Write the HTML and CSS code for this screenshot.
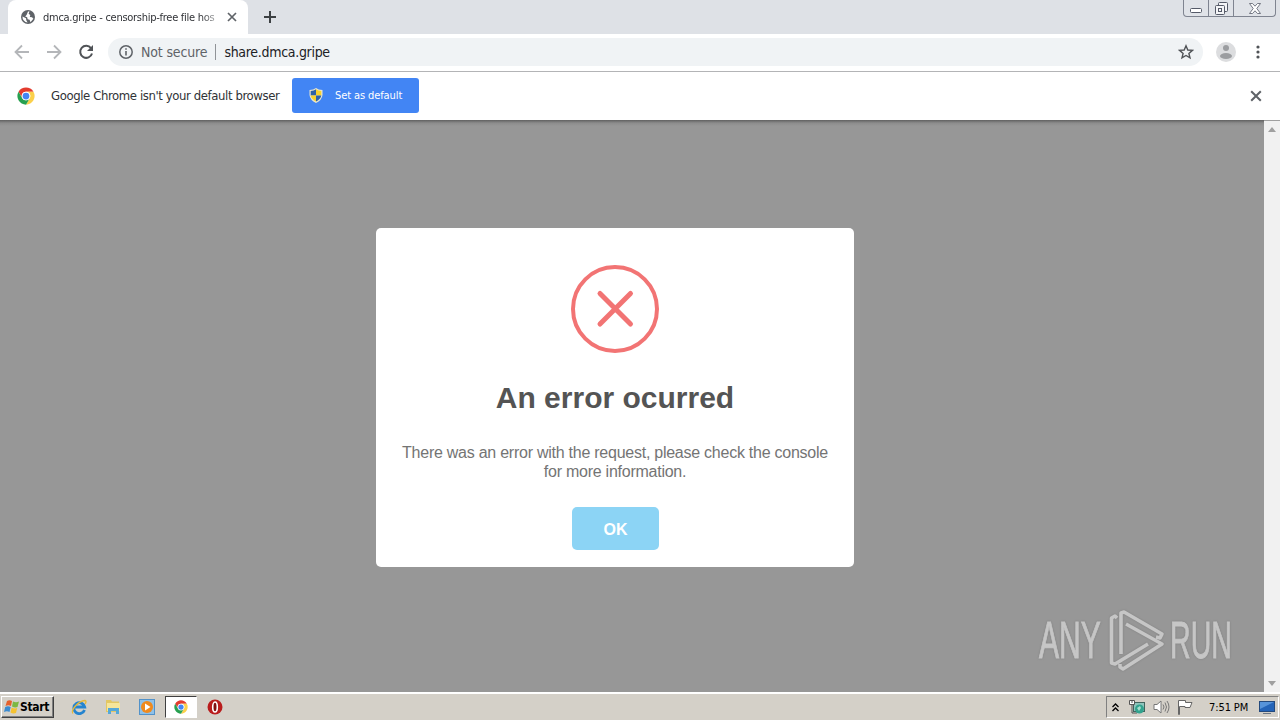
FILE: index.html
```html
<!DOCTYPE html>
<html lang="en">
<head>
	<meta charset="UTF-8">
	<title>dmca.gripe - censorship-free file hosting</title>
	<link rel="stylesheet" href="styles.css">
</head>
<body>
	<!-- shared icons -->
	<svg class="defs" width="0" height="0">
		<symbol id="chrome" viewBox="0 0 48 48">
			<circle cx="24" cy="24" r="23" fill="#fff"/>
			<path d="M4.1 12.5A23 23 0 0 1 43.9 12.5H24A11.5 11.5 0 0 0 14 29.7Z" fill="#e33b2e"/>
			<path d="M43.9 12.5A23 23 0 0 1 24 47L34 29.7A11.5 11.5 0 0 0 24 12.5Z" fill="#fbd04b"/>
			<path d="M24 47A23 23 0 0 1 4.1 12.5L14 29.7A11.5 11.5 0 0 0 34 29.7Z" fill="#27a050"/>
			<circle cx="24" cy="24" r="11.5" fill="#fff"/>
			<circle cx="24" cy="24" r="9" fill="#4285f4"/>
		</symbol>
		<symbol id="cross" viewBox="0 0 10 10">
			<path d="M1 1L9 9M9 1L1 9" fill="none" stroke="currentColor" stroke-width="1.7"/>
		</symbol>
	</svg>

	<div class="tabstrip">
		<div class="tab">
			<svg class="globe" width="14" height="14" viewBox="0 0 14 14">
				<circle cx="7" cy="7" r="7" fill="#5f6368"/>
				<path d="M7 1.600L8.500 1.500L7.600 3.800L9.300 5.100L8.800 7L11 7.300L12.400 8.800L9.500 12.200L8.600 9.800L6.600 9.200L6.200 7.200L4.200 6.400L5.700 4.700Z" fill="#fff"/>
				<path d="M1.500 6.500L5 8.300L5.300 10.200L6.600 12.600A5.700 5.700 0 0 1 1.500 6.500Z" fill="#fff"/>
			</svg>
			<span class="tab-title">dmca.gripe - censorship-free file hos</span>
			<svg class="tab-close" width="10" height="10"><use href="#cross"/></svg>
		</div>
		<svg class="new-tab" width="12" height="12" viewBox="0 0 12 12"><path d="M6 0V12M0 6H12" stroke="#3c4043" stroke-width="2"/></svg>
		<div class="caption">
			<span class="cap"><svg width="13" height="5" viewBox="0 0 13 5"><rect x=".5" y=".5" width="11" height="4" rx="1" fill="#fff" stroke="#555a68"/></svg></span>
			<span class="cap"><svg width="13" height="13" viewBox="0 0 13 13" fill="#f4f5f7" stroke="#555a68"><rect x="3.5" y=".5" width="9" height="9" rx="1"/><rect x=".5" y="3.5" width="9" height="9" rx="1"/><rect x="3.5" y="6.5" width="3" height="3"/></svg></span>
			<span class="cap wide"><svg width="12" height="11" viewBox="0 0 12 11"><path d="M.5.5H3.5L6 3.2L8.5.5H11.5L7.8 5.5L11.5 10.5H8.5L6 7.8L3.5 10.5H.5L4.2 5.5Z" fill="#fff" stroke="#555a68" stroke-width=".8"/></svg></span>
		</div>
	</div>

	<div class="toolbar">
		<svg class="nav" width="16" height="16" viewBox="0 0 16 16"><path d="M15 8H2M8 1.500L1.500 8L8 14.500" fill="none" stroke="#b4b6b9" stroke-width="1.800"/></svg>
		<svg class="nav" width="16" height="16" viewBox="0 0 16 16"><path d="M1 8H14M8 1.500L14.500 8L8 14.500" fill="none" stroke="#b4b6b9" stroke-width="1.800"/></svg>
		<svg class="nav" width="16" height="16" viewBox="0 0 16 16"><path d="M13 4.200A6 6 0 1 0 14 9.500" fill="none" stroke="#505357" stroke-width="2"/><path d="M15 1V7H9Z" fill="#505357"/></svg>
		<div class="omnibox">
			<svg width="14" height="14" viewBox="0 0 14 14"><circle cx="7" cy="7" r="6.200" fill="none" stroke="#5f6368" stroke-width="1.500"/><path d="M7 6V10.500M7 3.300V4.800" stroke="#5f6368" stroke-width="1.600"/></svg>
			<span class="insecure">Not secure</span>
			<span class="url">share.dmca.gripe</span>
			<svg class="star" width="16" height="16" viewBox="0 0 16 16"><path d="M8 1.800L9.800 6L14.400 6.400L10.900 9.400L12 13.900L8 11.500L4 13.900L5.100 9.400L1.600 6.400L6.200 6Z" fill="none" stroke="#505357" stroke-width="1.400"/></svg>
		</div>
		<svg class="avatar" width="20" height="20" viewBox="0 0 20 20"><circle cx="10" cy="10" r="10" fill="#dcdddf"/><circle cx="10" cy="6" r="3" fill="#9b9da0"/><ellipse cx="10" cy="14" rx="6" ry="3" fill="#9b9da0"/></svg>
		<svg class="menu" width="4" height="14" viewBox="0 0 4 14" fill="#505357"><circle cx="2" cy="2" r="1.600"/><circle cx="2" cy="7" r="1.600"/><circle cx="2" cy="12" r="1.600"/></svg>
	</div>

	<div class="infobar">
		<svg width="18" height="18"><use href="#chrome"/></svg>
		<span class="infobar-text">Google Chrome isn't your default browser</span>
		<a class="set-default" href="#">
			<svg width="14" height="15" viewBox="0 0 14 15">
				<path d="M7 0Q9.500 2 13.500 2V7Q13 12 7 15Q1 12 .5 7V2Q4.500 2 7 0Z" fill="#e8e6d0"/>
				<path d="M7 1.300V7.500H1.700V3Q5 3 7 1.300Z" fill="#2e62a8"/>
				<path d="M7 1.300Q9 3 12.300 3V7.500H7Z" fill="#f7d22e"/>
				<path d="M1.700 7.500H7V13.600Q2.200 11 1.700 7.500Z" fill="#f7d22e"/>
				<path d="M7 7.500H12.300Q11.800 11 7 13.600Z" fill="#2e62a8"/>
			</svg>
			<span>Set as default</span>
		</a>
		<svg class="infobar-close" width="12" height="12"><use href="#cross"/></svg>
	</div>

	<div class="viewport">
		<div class="page">
			<div class="modal">
				<svg class="error-icon" width="88" height="88" viewBox="0 0 88 88" fill="none" stroke="#f27474">
					<circle cx="44" cy="44" r="42" stroke-width="4"/>
					<path d="M29 28.500L59.500 59M59.500 28.500L29 59" stroke-width="5" stroke-linecap="round"/>
				</svg>
				<h1>An error ocurred</h1>
				<p>There was an error with the request, please check the console for more information.</p>
				<a class="ok" href="#">OK</a>
			</div>
			<div class="watermark">
				<span class="any">ANY</span>
				<svg width="56" height="62" viewBox="0 0 56 62" fill="none" stroke="#c6c6c6" stroke-width="3.600" stroke-linejoin="round">
					<path d="M8 8L6 6L2.500 8V53L6 54L39 34"/>
					<path d="M12 44V3L15 2L53 24L51 28L47 27"/>
					<path d="M17 14L53 34L14 59L11 57V54"/>
				</svg>
				<span class="run">RUN</span>
			</div>
		</div>
		<div class="scrollbar">
			<svg width="8" height="5" viewBox="0 0 8 5"><path d="M0 5L4 0L8 5Z" fill="#a0a0a0"/></svg>
			<svg width="8" height="5" viewBox="0 0 8 5"><path d="M0 0L4 5L8 0Z" fill="#a0a0a0"/></svg>
		</div>
	</div>

	<div class="taskbar">
		<a class="start" href="#">
			<svg width="16" height="16" viewBox="0 0 16 16">
				<path d="M3 2Q5.500 .5 8 2L7 7Q4.500 5.500 1.500 7Z" fill="#e5602c"/>
				<path d="M9 2.500Q12 4 15 2.500L13.500 8Q11 9 8 7.500Z" fill="#7cb843"/>
				<path d="M1.200 8Q4 6.500 6.700 8L5.500 13Q3 11.500 0 13Z" fill="#3b8bd0"/>
				<path d="M7.700 8.500Q10.500 10 13.200 9L12 14Q9 15 6.500 13.500Z" fill="#f5c230"/>
			</svg>
			<span>Start</span>
		</a>
		<div class="quick">
			<span class="task"><svg width="16" height="16" viewBox="0 0 16 16" fill="none"><path d="M13.500 11A5.500 5.500 0 1 1 13.700 8H4" stroke="#2584cf" stroke-width="2.800"/><path d="M2 14.500C-1 12 7 2 14 1.500Q16 2 14 5" stroke="#e6b93a" stroke-width="1.400"/></svg></span>
			<span class="task"><svg width="16" height="16" viewBox="0 0 16 16"><path d="M1 1H6L7 2.500H14V13H1Z" fill="#e3c763"/><path d="M2 4H15V12H2Z" fill="#f6e59a"/><path d="M3 15V9H14V15H11V12H6V15Z" fill="#56a8d8"/></svg></span>
			<span class="task"><svg width="16" height="16" viewBox="0 0 16 16"><rect x=".5" y=".5" width="15" height="15" fill="#8fc1e8" stroke="#5292c9"/><circle cx="8" cy="8" r="6" fill="#f08a1d"/><path d="M6 4.500L11.500 8L6 11.500Z" fill="#fff"/></svg></span>
			<span class="task active"><svg width="14" height="14"><use href="#chrome"/></svg></span>
			<span class="task"><svg width="16" height="16" viewBox="0 0 16 16"><circle cx="8" cy="8" r="7.500" fill="#b91c1c"/><ellipse cx="8" cy="8" rx="2.300" ry="5" fill="#811010" stroke="#fff" stroke-width="1.600"/></svg></span>
		</div>
		<div class="tray">
			<svg width="7" height="9" viewBox="0 0 7 9" fill="none" stroke="#000" stroke-width="1.300"><path d="M.5 4L3.500 1L6.500 4M.5 8L3.500 5L6.500 8"/></svg>
			<svg class="net" width="16" height="16" viewBox="0 0 16 16"><rect x="4.500" y="3.500" width="11" height="9" fill="#8ec5bd" stroke="#41645e"/><path d="M.5 1.500H5.500V5.500H.5Z" fill="#fff" stroke="#555"/><path d="M3 1V4M3 6V14H8" fill="none" stroke="#555"/><circle cx="10.500" cy="10" r="4.500" fill="#32a38e"/><path d="M8 9L11 7L12 9L10 12Z" fill="#a9dfcf"/></svg>
			<svg class="sound" width="17" height="16" viewBox="0 0 17 16" fill="none" stroke="#777"><path d="M1 5.500H4L8 2V14L4 10.500H1Z" fill="#fff"/><path d="M10 5.500Q12 8 10 10.500M12 3.500Q15 8 12 12.500M14 2Q18 8 14 14"/></svg>
			<svg class="flag" width="16" height="16" viewBox="0 0 16 16" fill="#fff" stroke="#666"><path d="M1.500 15.500V1.500H8.500V3.500H15L13 8.500H8V7.500H2.500V15.500Z"/></svg>
			<span class="clock">7:51 PM</span>
			<svg class="desk" width="16" height="14" viewBox="0 0 16 14"><rect x=".5" y="1.500" width="15" height="10" fill="#2464b8" stroke="#244a7d"/><path d="M1 2H15L1 9Z" fill="#5794da"/><path d="M4 13.500H12" stroke="#6d7784"/></svg>
		</div>
	</div>
</body>
</html>
```
FILE: styles.css
```css
* {
	box-sizing: border-box;
}
body {
	margin: 0;
	width: 1280px;
	height: 720px;
	overflow: hidden;
	display: flex;
	flex-direction: column;
	background: #fff;
	color: #303236;
	font-family: "DejaVu Sans Condensed", "DejaVu Sans", sans-serif;
	font-stretch: condensed;
}
a {
	text-decoration: none;
}
svg {
	display: block;
	flex: none;
}
.defs {
	position: absolute;
}
.tabstrip {
	display: flex;
	height: 34px;
	flex: none;
	padding-left: 8px;
	background: #dee1e6;
}
.tab {
	display: flex;
	align-items: center;
	width: 240px;
	padding-left: 13px;
	background: #fff;
	border-radius: 8px 8px 0 0;
}
.tab-title {
	width: 175px;
	margin-left: 8px;
	white-space: nowrap;
	font-size: 11px;
	letter-spacing: -.27px;
	-webkit-mask-image: linear-gradient(90deg, #000 90%, rgba(0, 0, 0, .3));
	mask-image: linear-gradient(90deg, #000 90%, rgba(0, 0, 0, .3));
}
.tab-close {
	margin-left: 9px;
	color: #5f6368;
}
.new-tab {
	margin: 11px 0 0 16px;
}
.caption {
	display: flex;
	height: 17px;
	margin: 0 4px 0 auto;
	border: 1px solid #7f8490;
	border-top: 0;
	border-radius: 0 0 4px 4px;
	background: #e0e3e8;
}
.cap {
	display: flex;
	align-items: center;
	justify-content: center;
	width: 25px;
	border-right: 1px solid #7f8490;
}
.cap:first-child {
	padding-top: 5px;
}
.cap.wide {
	width: 41px;
	border: 0;
}
.toolbar {
	display: flex;
	align-items: center;
	height: 38px;
	flex: none;
	padding: 0 20px 1px 14px;
	border-bottom: 1px solid #b3b4b6;
}
.nav {
	margin-right: 16px;
}
.omnibox {
	display: flex;
	align-items: center;
	width: 1095px;
	height: 28px;
	margin-left: -2px;
	padding: 0 9px 0 11px;
	border-radius: 14px;
	background: #f0f3f5;
	font-size: 14px;
}
.insecure {
	margin-left: 8px;
	padding-right: 8px;
	border-right: 1px solid #909397;
	color: #5f6368;
	letter-spacing: -.15px;
}
.url {
	margin-left: 8px;
	color: #202124;
	letter-spacing: -.3px;
}
.star {
	margin-left: auto;
}
.avatar {
	margin-left: 13px;
}
.menu {
	margin-left: auto;
}
.infobar {
	display: flex;
	align-items: center;
	height: 48px;
	flex: none;
	padding: 0 18px 1px 17px;
}
.infobar-text {
	margin-left: 16px;
	width: 241px;
	white-space: nowrap;
	font-size: 13px;
	letter-spacing: -.4px;
}
.set-default {
	display: flex;
	align-items: center;
	width: 127px;
	height: 35px;
	padding-left: 17px;
	border-radius: 3px;
	background: #4285f4;
	color: #fff;
	font-size: 11px;
	letter-spacing: -.1px;
}
.set-default span {
	margin-left: 12px;
}
.infobar-close {
	margin-left: auto;
	color: #5f6368;
}
.viewport {
	display: flex;
	height: 572px;
	flex: none;
}
.page {
	position: relative;
	width: 1264px;
	padding: 108px 0 0 376px;
	background: linear-gradient(#606060, #8c8c8c 3px, #979797 6px);
}
.modal {
	display: flex;
	flex-direction: column;
	align-items: center;
	width: 478px;
	height: 339px;
	padding: 37px 20px 0;
	border-radius: 5px;
	background: #fff;
	font-family: "Liberation Sans", Arial, sans-serif;
	text-align: center;
}
.modal h1 {
	margin: 28px 0 0;
	color: #545454;
	font-size: 30px;
	line-height: 34px;
}
.modal p {
	margin: 28px 0 0;
	color: #747474;
	font-size: 16px;
	line-height: 19px;
	letter-spacing: -.25px;
}
.ok {
	width: 87px;
	height: 43px;
	margin: 26px 0 0 1px;
	border-radius: 5px;
	background: #8cd4f5;
	color: #fff;
	font-size: 16px;
	font-weight: bold;
	line-height: 45px;
}
.watermark {
	position: absolute;
	left: 1039px;
	top: 489px;
	display: flex;
	align-items: center;
	height: 64px;
	color: #c6c6c6;
	font-family: "Liberation Sans", Arial, sans-serif;
	filter: drop-shadow(0 0 1px #808080);
}
.watermark span {
	width: 62px;
	font-size: 51px;
	line-height: 64px;
	transform: scaleX(.59);
	transform-origin: left;
	-webkit-text-stroke: 1px #c6c6c6;
}
.watermark .run {
	transform: scaleX(.56);
}
.watermark svg {
	margin: 0 5px 0 8px;
}
.scrollbar {
	display: flex;
	flex-direction: column;
	align-items: center;
	justify-content: space-between;
	width: 16px;
	padding: 6px 0;
	background: #f1f1f1;
	border-top: 1px solid #a0a0a0;
}
.taskbar {
	display: flex;
	align-items: center;
	height: 28px;
	flex: none;
	padding: 3px 0 1px 1px;
	background: #d4d0c8;
	box-shadow: inset 0 2px #fff;
}
.start {
	display: flex;
	align-items: center;
	width: 53px;
	height: 22px;
	padding-left: 2px;
	border: 1px solid;
	border-color: #fff #404040 #404040 #fff;
	box-shadow: inset -1px -1px #808080;
	color: #000;
	font-size: 12px;
	font-weight: bold;
	letter-spacing: -.3px;
}
.quick {
	display: flex;
	align-items: center;
	gap: 2px;
	margin-left: 9px;
}
.task {
	display: flex;
	align-items: center;
	justify-content: center;
	width: 32px;
	height: 22px;
}
.task.active {
	border: 1px solid;
	border-color: #404040 #fff #fff #404040;
	background: #fff;
}
.tray {
	display: flex;
	align-items: center;
	width: 173px;
	height: 22px;
	margin: 0 1px 0 auto;
	padding-left: 5px;
	border: 1px solid;
	border-color: #808080 #fff #fff #808080;
	color: #000;
}
.net {
	margin-left: 10px;
}
.sound {
	margin-left: 8px;
}
.flag {
	margin-left: 7px;
}
.clock {
	margin-left: 16px;
	width: 40px;
	white-space: nowrap;
	font-size: 11px;
	letter-spacing: -.1px;
}
.desk {
	margin-left: 10px;
}
```
